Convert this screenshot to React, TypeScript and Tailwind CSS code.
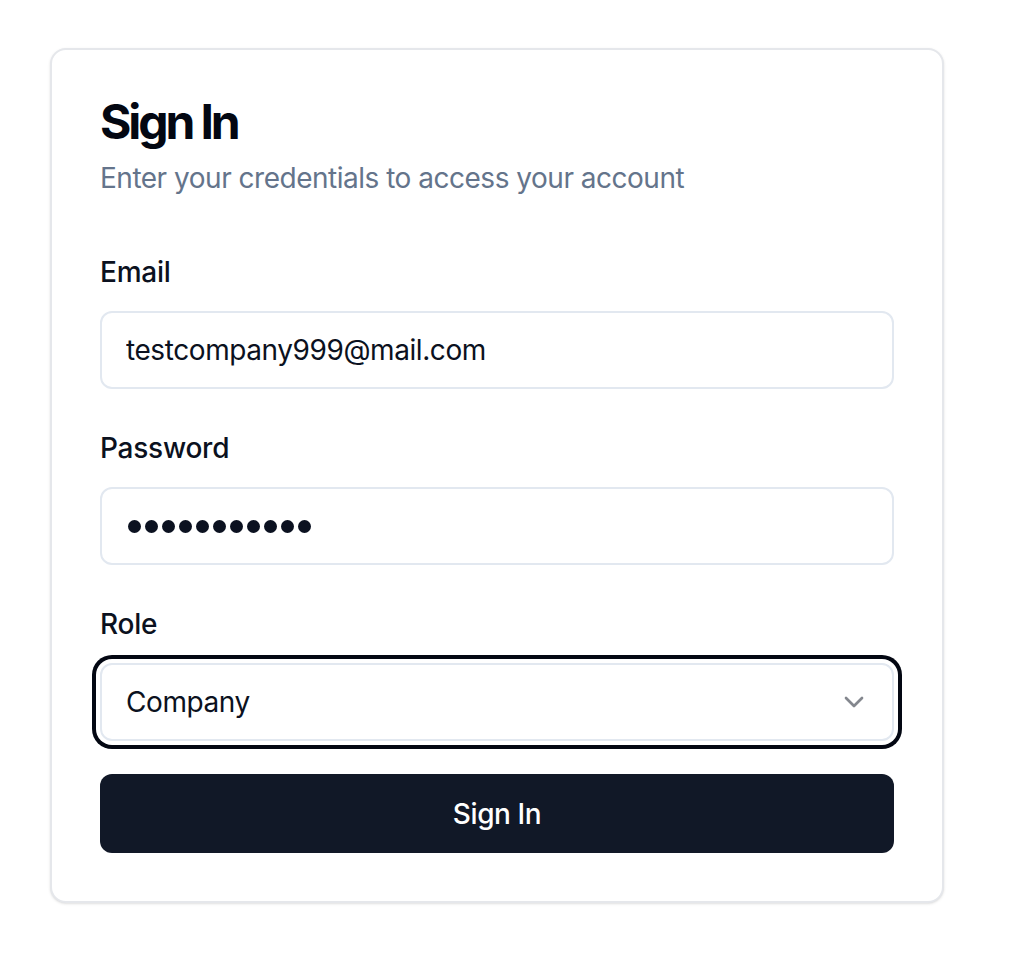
import { ChevronDown } from 'lucide-react';

function Field({ label, children }: { label: string; children: React.ReactNode }) {
    return (
        <div className="flex flex-col">
            <label className="text-[28px] leading-[40px] font-medium text-[#0b1120]">{label}</label>
            <div className="mt-[19px]">{children}</div>
        </div>
    );
}

export default function App() {
    return (
        <div className="min-h-screen bg-white pt-[48px] pl-[50px] font-['Inter',sans-serif]">
            <div className="w-[894px] rounded-2xl border-2 border-[#e5e7eb] bg-white px-[48px] py-[48px] tracking-[-0.015em] shadow-sm">
                {/* Header */}
                <h1 className="text-[48px] leading-[48px] font-bold tracking-[-0.065em] text-[#030712]">Sign In</h1>
                <p className="mt-[12px] text-[28px] leading-[40px] tracking-[-0.0175em] text-[#64748b]">
                    Enter your credentials to access your account
                </p>

                {/* Form */}
                <form className="mt-[54px] flex flex-col gap-[39px]" onSubmit={(e) => e.preventDefault()}>
                    <Field label="Email">
                        <input
                            type="email"
                            readOnly
                            value="testcompany999@mail.com"
                            className="h-[78px] w-full rounded-xl border-2 border-[#e2e8f0] bg-white px-[24px] text-[28px] tracking-[-0.015em] text-[#0b1120] outline-none"
                        />
                    </Field>
                    <Field label="Password">
                        {/* masked value, drawn as dots the size the browser shows them */}
                        <div
                            role="textbox"
                            aria-label="Password"
                            className="flex h-[78px] w-full items-center gap-[4px] rounded-xl border-2 border-[#e2e8f0] bg-white pl-[26px]"
                        >
                            {[...Array(11)].map((_, i) => (
                                <span key={i} className="h-[13px] w-[13px] rounded-full bg-[#0b1120]" />
                            ))}
                        </div>
                    </Field>
                    <Field label="Role">
                        <button
                            type="button"
                            className="flex h-[78px] w-full items-center justify-between rounded-xl border-2 border-[#e2e8f0] bg-white pl-[24px] pr-[22px] text-[28px] tracking-[-0.015em] text-[#0b1120] ring-4 ring-[#030712] ring-offset-4 ring-offset-white"
                        >
                            <span>Company</span>
                            <ChevronDown size={32} strokeWidth={2} className="text-[#0b1120] opacity-50" />
                        </button>
                    </Field>
                </form>

                <button
                    type="button"
                    className="mt-[33px] flex h-[79px] w-full items-center justify-center rounded-xl bg-[#111827] text-[28px] font-medium tracking-[-0.015em] text-white"
                >
                    Sign In
                </button>
            </div>
        </div>
    );
}
